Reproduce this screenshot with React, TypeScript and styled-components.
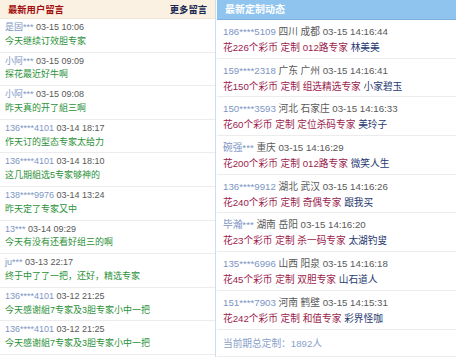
import styled, { createGlobalStyle } from 'styled-components';

const GlobalStyle = createGlobalStyle`
    html, body {
        margin: 0;
        padding: 0;
        background: #fff;
    }
    body {
        font-family: 'Liberation Sans', 'Noto Sans CJK SC', sans-serif;
    }
`;

type Comment = { user: string; time: string; text: string };
type Order = { user: string; place: string; time: string; coins: number; expert: string; master: string };

const comments: Comment[] = [
    { user: '是固***', time: '03-15 10:06', text: '今天继续订效胆专家' },
    { user: '小阿***', time: '03-15 09:09', text: '探花最近好牛啊' },
    { user: '小阿***', time: '03-15 09:08', text: '昨天真的开了組三啊' },
    { user: '136****4101', time: '03-14 18:17', text: '作天订的型态专家太给力' },
    { user: '136****4101', time: '03-14 18:10', text: '这几期組选5专家够神的' },
    { user: '138****9976', time: '03-14 13:24', text: '昨天定了专家又中' },
    { user: '13***', time: '03-14 09:29', text: '今天有没有还看好组三的啊' },
    { user: 'ju***', time: '03-13 22:17', text: '终于中了了一把，还好，精选专家' },
    { user: '136****4101', time: '03-12 21:25', text: '今天感谢組7专家及3胆专家小中一把' },
    { user: '136****4101', time: '03-12 21:25', text: '今天感谢組7专家及3胆专家小中一把' },
];

const orders: Order[] = [
    { user: '186****5109', place: '四川 成都', time: '03-15 14:16:44', coins: 226, expert: '012路专家', master: '林美美' },
    { user: '159****2318', place: '广东 广州', time: '03-15 14:16:41', coins: 150, expert: '组选精选专家', master: '小家碧玉' },
    { user: '150****3593', place: '河北 石家庄', time: '03-15 14:16:33', coins: 60, expert: '定位杀码专家', master: '美玲子' },
    { user: '碗强***', place: '重庆', time: '03-15 14:16:29', coins: 200, expert: '012路专家', master: '微笑人生' },
    { user: '136****9912', place: '湖北 武汉', time: '03-15 14:16:26', coins: 240, expert: '奇偶专家', master: '跟我买' },
    { user: '毕瀚***', place: '湖南 岳阳', time: '03-15 14:16:20', coins: 23, expert: '杀一码专家', master: '太湖钓叟' },
    { user: '135****6996', place: '山西 阳泉', time: '03-15 14:16:18', coins: 45, expert: '双胆专家', master: '山石道人' },
    { user: '151****7903', place: '河南 鹤壁', time: '03-15 14:15:31', coins: 242, expert: '和值专家', master: '彩界怪咖' },
];

const App = () => {
    return (
        <>
            <GlobalStyle />
            <Page>
                <LeftPanel>
                    <LeftHeader>
                        <LeftTitle>最新用户留言</LeftTitle>
                        <MoreLink href='#'>更多留言</MoreLink>
                    </LeftHeader>
                    {comments.map((c, i) => (
                        <CommentRow key={i}>
                            <Line>
                                <User>{c.user}</User> <Time>{c.time}</Time>
                            </Line>
                            <Message>{c.text}</Message>
                        </CommentRow>
                    ))}
                </LeftPanel>
                <RightPanel>
                    <RightHeader>最新定制动态</RightHeader>
                    {orders.map((o, i) => (
                        <OrderRow key={i}>
                            <OrderLine>
                                <User>{o.user}</User> <Time>{o.place} {o.time}</Time>
                            </OrderLine>
                            <OrderLine>
                                <Spend>花{o.coins}个彩币 定制 {o.expert}</Spend> <Master>{o.master}</Master>
                            </OrderLine>
                        </OrderRow>
                    ))}
                    <Footer>当前期总定制：1892人</Footer>
                </RightPanel>
            </Page>
        </>
    );
};

export default App;

const Page = styled.div`
    display: flex;
    width: 456px;
    height: 357px;
    overflow: hidden;
`;

const LeftPanel = styled.div`
    width: 215px;
    flex-shrink: 0;
    border-right: 1px solid #cfdeee;
`;

const LeftHeader = styled.div`
    display: flex;
    align-items: center;
    justify-content: space-between;
    height: 18px;
    padding: 0 8px;
    background: #fbf1e2;
    border-bottom: 1px solid #efe6d8;
    font-size: 9.3px;
    font-weight: bold;
`;

const LeftTitle = styled.span`
    color: #a30c0c;
`;

const MoreLink = styled.a`
    color: #1b2a52;
    text-decoration: none;
`;

const CommentRow = styled.div`
    padding: 2px 5px 3px;
    border-bottom: 1px solid #ececec;
    font-size: 9px;
    line-height: 13.8px;
`;

const Line = styled.div`
    white-space: nowrap;
`;

const User = styled.span`
    color: #7d95c4;
`;

const Time = styled.span`
    color: #585858;
`;

const Message = styled.div`
    color: #2a9137;
    white-space: nowrap;
`;

const RightPanel = styled.div`
    flex: 1;
    display: flex;
    flex-direction: column;
    margin-left: 1px;
`;

const RightHeader = styled.div`
    height: 19px;
    line-height: 19px;
    padding: 0 8px;
    background: #8fc4ee;
    border-bottom: 1px solid #7eaedb;
    color: #fff;
    font-size: 10px;
    font-weight: bold;
`;

const OrderRow = styled.div`
    padding: 4px 6px 1.7px;
    border-bottom: 1px solid #ececec;
    font-size: 9.7px;
`;

const OrderLine = styled.div`
    line-height: 16px;
    white-space: nowrap;
`;

const Spend = styled.span`
    color: #9b1c4c;
`;

const Master = styled.span`
    color: #26386f;
`;

const Footer = styled.div`
    padding: 6px 6px 0;
    height: 20px;
    line-height: 16px;
    border-bottom: 1px solid #ececec;
    color: #8aa1cb;
    font-size: 9.7px;
`;
